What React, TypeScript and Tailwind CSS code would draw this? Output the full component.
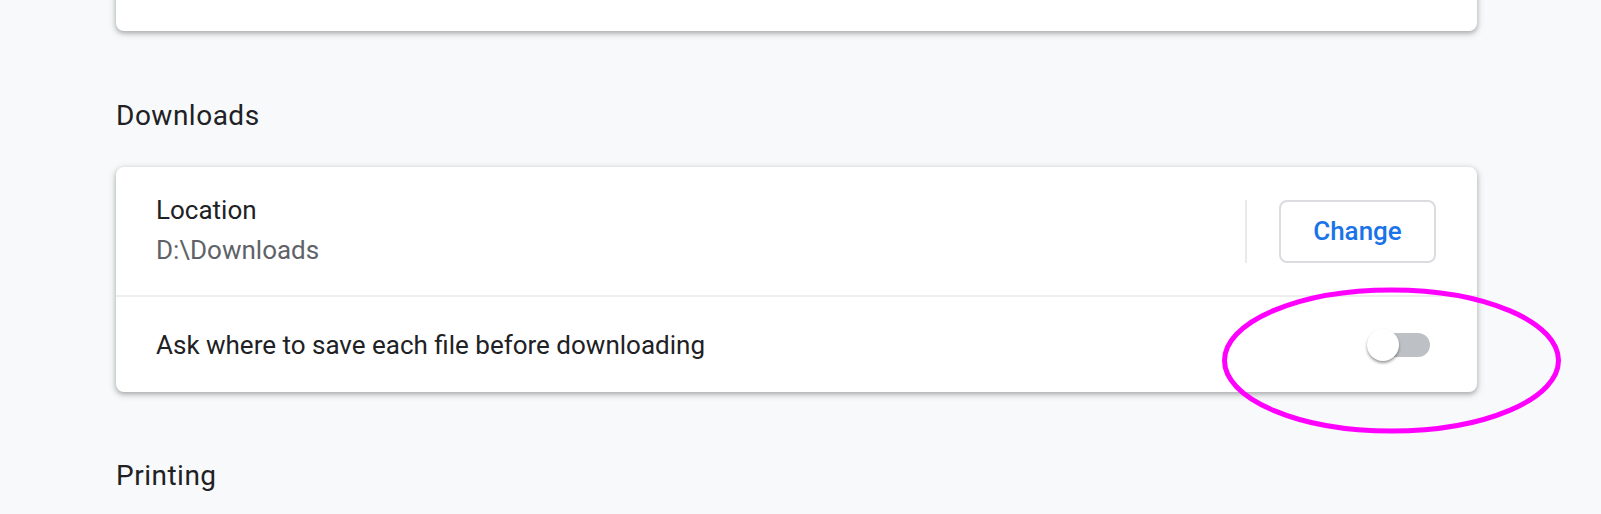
const DOWNLOAD_PATH = 'D:\\Downloads';

function Toggle({ on = false }: { on?: boolean }) {
  return (
    <div className="relative h-[32px] w-[64px]">
      <div className="absolute left-[7px] top-[4px] h-[24px] w-[56px] rounded-full bg-[#bdc1c6]" />
      <div
        className={
          'absolute top-0 h-[32px] w-[32px] rounded-full bg-white shadow-[0_2px_3px_rgba(0,0,0,0.4)] ' +
          (on ? 'left-[32px]' : 'left-0')
        }
      />
    </div>
  );
}

export default function App() {
  return (
    <div className="relative h-[514px] w-[1601px] overflow-hidden bg-[#f8f9fa] font-['Roboto','Liberation_Sans',sans-serif] text-[#202124]">
      <div className="ml-[116px] w-[1361px]">
        {/* previous card, mostly scrolled off */}
        <div className="mt-[-69px] h-[100px] rounded-[8px] bg-white shadow-[0_2px_4px_rgba(60,64,67,0.3),0_2px_6px_2px_rgba(60,64,67,0.15)]" />

        <h2 className="mt-[65px] h-[40px] text-[28px] leading-[40px] tracking-[0.5px]">Downloads</h2>

        <div className="mt-[31px] rounded-[8px] bg-white shadow-[0_2px_4px_rgba(60,64,67,0.3),0_2px_6px_2px_rgba(60,64,67,0.15)]">
          <div className="flex h-[128px] items-center pl-[40px] pr-[41px]">
            <div className="flex-1 pb-[3px] text-[26px] leading-[40px]">
              <div>Location</div>
              <div className="text-[#5f6368]">{DOWNLOAD_PATH}</div>
            </div>
            <div className="mr-[32px] h-[63px] w-[2px] bg-[#e8eaed]" />
            <button className="h-[63px] w-[157px] rounded-[8px] border-2 border-[#dadce0] bg-white text-[26px] font-medium text-[#1a73e8]">
              Change
            </button>
          </div>
          <div className="flex h-[97px] items-center border-t-2 border-[#eeeeee] pl-[40px] pr-[46px]">
            <div className="flex-1 text-[26px] leading-[40px]">Ask where to save each file before downloading</div>
            <Toggle />
          </div>
        </div>

        <h2 className="mt-[64px] h-[40px] text-[28px] leading-[40px] tracking-[0.5px]">Printing</h2>
      </div>

      {/* hand-drawn annotation */}
      <svg className="pointer-events-none absolute left-0 top-0" width="1601" height="514">
        <ellipse cx="1391.5" cy="360.5" rx="167" ry="70.5" fill="none" stroke="#ff00ff" strokeWidth="5" />
      </svg>
    </div>
  );
}
